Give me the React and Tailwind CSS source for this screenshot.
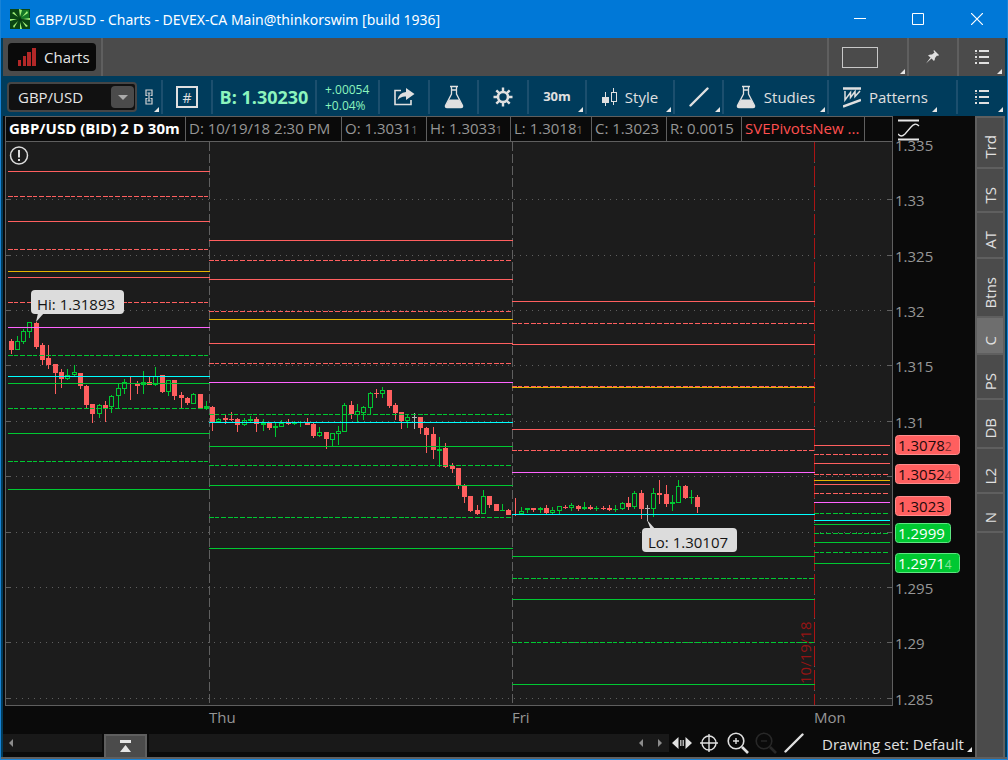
const RED = "#ff5f5f";
const GREEN = "#00c832";
const YELLOW = "#e6b400";
const PINK = "#ff64ff";
const CYAN = "#00ffff";

// pivot levels for each session: [y, color, dashed]
const sessions = [
  {
    from: 8,
    to: 210,
    levels: [
      [171, RED], [196, RED, true], [221, RED], [249, RED, true], [271, YELLOW],
      [277, RED], [302, RED, true], [327, PINK], [355, GREEN, true], [376, CYAN],
      [383, GREEN], [408, GREEN, true], [433, GREEN], [461, GREEN, true], [489, GREEN],
    ],
  },
  {
    from: 209,
    to: 513,
    levels: [
      [240, RED], [260, RED, true], [279, RED], [311, RED, true], [319, YELLOW],
      [343, RED], [363, RED, true], [382, PINK], [414, GREEN, true], [422, CYAN],
      [446, GREEN], [465, GREEN, true], [485, GREEN], [517, GREEN, true], [548, GREEN],
    ],
  },
  {
    from: 512,
    to: 815,
    levels: [
      [301, RED], [323, RED, true], [344, RED], [387, YELLOW], [386, RED, true],
      [429, RED], [450, RED, true], [472, PINK], [514, CYAN], [556, GREEN],
      [578, GREEN, true], [599, GREEN], [642, GREEN, true], [684, GREEN],
    ],
  },
  {
    from: 814,
    to: 890,
    levels: [
      [445, RED], [454, RED, true], [463, RED], [474, RED, true], [480, YELLOW],
      [484, RED], [493, RED, true], [502, PINK], [513, GREEN, true], [520, CYAN],
      [524, GREEN], [533, GREEN, true], [542, GREEN], [552, GREEN, true], [563, GREEN],
    ],
  },
];

// [x, high, body top, body bottom, low, kind]
// d = down, u = up (hollow), f = up (filled), n = unchanged
const candles = [
  [11, 339, 341, 350, 354, "d"], [17, 336, 341, 350, 350, "u"], [23, 329, 331, 342, 344, "u"],
  [29, 322, 322, 332, 338, "u"], [36, 322, 323, 347, 349, "d"], [42, 343, 345, 360, 365, "d"],
  [48, 345, 358, 365, 369, "d"], [55, 364, 364, 373, 394, "d"], [61, 369, 372, 379, 388, "d"],
  [67, 369, 375, 379, 380, "u"], [74, 365, 372, 375, 376, "u"], [80, 373, 373, 386, 389, "d"],
  [86, 385, 386, 405, 408, "d"], [92, 404, 404, 414, 423, "d"], [99, 404, 405, 414, 418, "u"],
  [105, 401, 405, 409, 422, "d"], [111, 395, 396, 407, 413, "u"], [118, 384, 388, 396, 408, "u"],
  [124, 379, 382, 389, 394, "u"], [130, 376, 376, 377, 400, "d"], [137, 381, 383, 386, 394, "d"],
  [143, 371, 382, 385, 394, "f"], [149, 377, 382, 385, 385, "d"], [155, 367, 376, 385, 386, "u"],
  [162, 375, 375, 392, 393, "d"], [168, 380, 380, 392, 396, "u"], [174, 380, 380, 396, 400, "d"],
  [181, 392, 395, 398, 408, "d"], [187, 397, 398, 403, 405, "d"], [193, 393, 394, 404, 404, "u"],
  [200, 394, 394, 408, 408, "d"], [206, 401, 406, 409, 410, "f"], [212, 406, 407, 422, 431, "d"],
  [218, 418, 419, 422, 422, "u"], [225, 414, 418, 420, 424, "d"], [231, 412, 419, 420, 421, "d"],
  [237, 418, 419, 425, 432, "d"], [244, 418, 420, 425, 426, "u"], [250, 416, 419, 421, 422, "f"],
  [256, 417, 419, 424, 432, "d"], [263, 419, 422, 425, 431, "f"], [269, 422, 422, 428, 430, "d"],
  [275, 422, 426, 428, 437, "f"], [281, 420, 423, 427, 427, "u"], [288, 419, 422, 424, 425, "d"],
  [294, 421, 422, 424, 425, "f"], [300, 421, 422, 423, 427, "f"], [307, 418, 422, 425, 425, "d"],
  [313, 423, 424, 436, 438, "d"], [319, 427, 432, 436, 437, "u"], [326, 432, 432, 439, 449, "d"],
  [332, 433, 433, 440, 446, "u"], [338, 426, 431, 434, 445, "u"], [344, 403, 405, 432, 432, "u"],
  [351, 401, 405, 414, 419, "d"], [357, 404, 411, 415, 422, "u"], [363, 406, 407, 413, 420, "u"],
  [370, 392, 393, 408, 414, "u"], [376, 389, 393, 394, 398, "d"], [382, 387, 390, 394, 398, "u"],
  [389, 390, 390, 406, 408, "d"], [395, 403, 405, 413, 420, "d"], [401, 412, 412, 421, 429, "d"],
  [407, 415, 417, 421, 428, "u"], [414, 413, 417, 418, 429, "n"], [420, 417, 417, 428, 434, "d"],
  [426, 427, 428, 435, 453, "d"], [433, 427, 434, 450, 459, "d"], [439, 437, 449, 451, 467, "f"],
  [445, 443, 448, 467, 468, "d"], [452, 463, 466, 469, 473, "d"], [458, 468, 468, 485, 489, "d"],
  [464, 484, 485, 497, 503, "d"], [470, 496, 496, 511, 512, "d"], [477, 505, 510, 514, 515, "d"],
  [483, 490, 496, 514, 514, "u"], [489, 496, 496, 505, 508, "d"], [496, 504, 504, 511, 511, "d"],
  [502, 504, 510, 511, 511, "f"], [508, 509, 510, 515, 515, "d"], [515, 498, 514, 515, 516, "d"],
  [521, 507, 511, 514, 514, "u"], [527, 508, 508, 510, 513, "f"], [533, 508, 508, 510, 512, "d"],
  [540, 507, 508, 510, 513, "f"], [546, 505, 508, 513, 514, "d"], [552, 507, 510, 513, 514, "u"],
  [559, 506, 506, 511, 514, "u"], [565, 505, 507, 508, 509, "d"], [571, 503, 505, 508, 511, "u"],
  [578, 505, 506, 509, 511, "d"], [584, 502, 507, 509, 510, "f"], [590, 505, 507, 509, 510, "d"],
  [596, 506, 508, 509, 511, "f"], [603, 506, 508, 509, 510, "d"], [609, 505, 508, 510, 511, "d"],
  [615, 505, 509, 510, 512, "f"], [622, 502, 503, 509, 510, "u"], [628, 497, 503, 507, 510, "d"],
  [634, 491, 493, 507, 509, "u"], [641, 490, 493, 509, 519, "d"], [647, 505, 508, 509, 521, "n"],
  [653, 488, 493, 509, 517, "u"], [659, 480, 493, 495, 504, "d"], [666, 485, 494, 504, 507, "d"],
  [672, 495, 502, 504, 511, "f"], [678, 480, 486, 503, 503, "u"], [685, 485, 486, 498, 499, "d"],
  [691, 490, 497, 498, 504, "f"], [697, 495, 497, 507, 513, "d"],
];

const prices = [
  [144, "1.335"], [199, "1.33"], [255, "1.325"], [310, "1.32"], [365, "1.315"], [421, "1.31"],
  [587, "1.295"], [642, "1.29"], [698, "1.285"],
];

const gridRows = [199, 255, 310, 365, 421, 476, 532, 587, 642, 698];

const tags = [
  { y: 435, w: 65, main: "1.3078", last: "2", bg: RED, edge: "#ff8c8c", text: "#1e0a0a", dim: "#8c3232" },
  { y: 464, w: 65, main: "1.3052", last: "4", bg: RED, edge: "#ff8c8c", text: "#1e0a0a", dim: "#8c3232" },
  { y: 496, w: 56, main: "1.3023", bg: RED, edge: "#ff8c8c", text: "#1e0a0a" },
  { y: 523, w: 56, main: "1.2999", bg: GREEN, edge: "#5fe682", text: "#ffffff" },
  { y: 553, w: 65, main: "1.2971", last: "4", bg: GREEN, edge: "#5fe682", text: "#ffffff", dim: "#82e69b" },
];

const tabs = [
  { name: "Trd", size: "h-[49px]" },
  { name: "TS", size: "h-[42px]" },
  { name: "AT", size: "h-[44px]" },
  { name: "Btns", size: "h-[57px]" },
  { name: "C", size: "h-[35px]", active: true },
  { name: "PS", size: "h-[43px]" },
  { name: "DB", size: "h-[47px]" },
  { name: "L2", size: "h-[43px]" },
  { name: "N", size: "h-[37px]" },
];

const Corner = ({ className = "right-0.5" }) => (
  <svg className={`absolute bottom-0.5 ${className}`} width="5" height="5" viewBox="0 0 5 5">
    <path d="M5 0V5H0Z" fill="#e6e6e6" />
  </svg>
);

const Flask = () => (
  <svg width="20" height="24" viewBox="0 0 20 24">
    <path
      d="M6 1.5H14M7.5 2V9L1.5 20.5Q1 22.5 3 22.5H17Q19 22.5 18.5 20.5L12.5 9V2M7.5 5H12.5"
      fill="none"
      stroke="#e0e0e0"
      strokeWidth="1.3"
    />
    <path d="M5 14.5H15L18.5 20.5Q19 22.5 17 22.5H3Q1 22.5 1.5 20.5Z" fill="#e0e0e0" />
  </svg>
);

const List = () => (
  <svg width="14" height="14" viewBox="0 0 14 14" shapeRendering="crispEdges">
    <path d="M0 0H2V2H0ZM0 6H2V8H0ZM0 12H2V14H0Z" fill="#e0e0e0" />
    <path d="M4 0H14V2H4ZM4 6H14V8H4ZM4 12H14V14H4Z" fill="#e0e0e0" />
    <path d="M0 3H2V4H0ZM0 9H2V10H0Z" fill="#8a8a8a" />
  </svg>
);

const LineIcon = () => (
  <svg width="20" height="20" viewBox="0 0 20 20">
    <path d="M1.5 18.5L18.5 1.5" stroke="#e0e0e0" strokeWidth="2.4" strokeLinecap="round" />
  </svg>
);

const ToolButton = ({ label, className, children }) => (
  <button
    type="button"
    aria-label={label}
    className={`relative flex h-[34px] shrink-0 items-center justify-center border-r-2 border-[#1c4f6e] ${className}`}
  >
    {children}
  </button>
);

const TitleBar = () => (
  <header className="flex h-[38px] items-center bg-[#0078d7] pl-[9px] text-white">
    <svg width="20" height="20" viewBox="0 0 20 20">
      <rect width="20" height="20" fill="#0a4614" />
      <rect x="11" y="1" width="8" height="9" fill="#147828" />
      <path
        d="M10 8L9 0L12 1ZM12 8L17 2L18 4ZM13 10L20 9V11ZM12 12L18 17L16 18ZM10 13L12 20H10ZM8 12L4 19L3 17ZM7 10L0 12V10ZM8 8L2 4L4 3Z"
        fill="#a0f078"
      />
      <circle cx="10.5" cy="10.5" r="1.3" fill="#063010" />
    </svg>
    <h1 className="ml-[5px] whitespace-nowrap font-['Noto_Sans','Open_Sans',sans-serif] text-[14px]">
      GBP/USD - Charts - DEVEX-CA Main@thinkorswim [build 1936]
    </h1>
    <div className="ml-auto flex h-full">
      <button type="button" aria-label="Minimize" className="flex w-[58px] items-center justify-center">
        <svg width="12" height="12" viewBox="0 0 12 12">
          <path d="M0 5.5H12" stroke="#fff" />
        </svg>
      </button>
      <button type="button" aria-label="Maximize" className="flex w-[58px] items-center justify-center">
        <svg width="12" height="12" viewBox="0 0 12 12">
          <path d="M.5 .5H11.5V11.5H.5Z" stroke="#fff" fill="none" />
        </svg>
      </button>
      <button type="button" aria-label="Close" className="flex w-[60px] items-center justify-center">
        <svg width="12" height="12" viewBox="0 0 12 12">
          <path d="M0 0L12 12M12 0L0 12" stroke="#fff" strokeWidth="1.2" />
        </svg>
      </button>
    </div>
  </header>
);

const GadgetBar = () => (
  <nav className="flex h-[38px] bg-[#4b4b4b] pl-[5px] pr-[1px]">
    <div className="flex items-center border-r-2 border-[#5f5f5f] pr-[5px]">
      <button type="button" className="flex h-7 w-[88px] items-center rounded bg-[#0a0a0a] pl-2.5 text-[15px] text-[#e6e6e6]">
        <svg width="18" height="18" viewBox="0 0 18 18" shapeRendering="crispEdges">
          <path d="M0 12H3V18H0ZM5 8H8V18H5ZM9 4H13V18H9ZM14 0H18V18H14Z" fill="#b42828" />
        </svg>
        <span className="ml-2">Charts</span>
      </button>
    </div>
    <button type="button" aria-label="Layout grid" className="relative ml-auto flex w-20 items-center border-l-2 border-[#5f5f5f] pl-[13px]">
      <span className="h-[21px] w-9 border border-[#c8c8c8]"></span>
      <Corner />
    </button>
    <button type="button" aria-label="Pin" className="flex w-[50px] items-center justify-center border-l-2 border-[#5f5f5f]">
      <svg width="14" height="14" viewBox="0 0 14 14">
        <path d="M8 0L13 5L12 6L11 5.5L9 8Q9 10 8 11L5.5 8.5L0 13.5L4.5 7.5L2 5.5Q4 4 6 4.5L8.5 2.5L7.5 1Z" fill="#e0e0e0" />
      </svg>
    </button>
    <button type="button" aria-label="Menu" className="relative flex w-[47px] items-center justify-center border-l-2 border-[#5f5f5f]">
      <List />
      <Corner />
    </button>
  </nav>
);

const Toolbar = () => (
  <div className="flex h-10 items-center bg-[#003c5c] pl-1 pt-0.5 text-[15px] text-[#e0e0e0]">
    <div className="flex h-[30px] w-[130px] shrink-0 items-center rounded border-2 border-[#464646] bg-[#111] pl-[9px] pr-[1px]">
      <input
        aria-label="Symbol"
        defaultValue="GBP/USD"
        className="w-0 flex-1 bg-transparent text-[15px] text-[#e6e6e6] outline-none"
      />
      <button type="button" aria-label="Choose symbol" className="flex h-[22px] w-[23px] items-center justify-center rounded-sm bg-[#4b4b4b]">
        <svg width="10" height="5" viewBox="0 0 10 5">
          <path d="M0 0H10L5 5Z" fill="#aaa" />
        </svg>
      </button>
    </div>
    <ToolButton label="Link symbol" className="w-[26px]">
      <svg width="8" height="16" viewBox="0 0 8 16">
        <path
          d="M2.5 6.5H1V1H7V6.5H5.5M2.5 9.5H1V15H7V9.5H5.5M4 3.5V12.5M2.5 4H5.5M2.5 12H5.5"
          fill="none"
          stroke="#d2d2d2"
          strokeWidth="1.2"
        />
      </svg>
      <Corner />
    </ToolButton>
    <ToolButton label="Symbol table" className="w-[50px]">
      <span className="flex h-[22px] w-[22px] items-center justify-center border-2 border-[#e0e0e0] text-[14px]">#</span>
    </ToolButton>
    <div className="flex h-[34px] w-[104px] shrink-0 items-center justify-center border-r-2 border-[#1c4f6e] text-[18px] font-bold text-[#8cf5be]">
      B: 1.30230
    </div>
    <div className="flex h-[34px] w-[63px] shrink-0 flex-col justify-center border-r-2 border-[#1c4f6e] pl-2 pt-0.5 text-[12px] leading-4 text-[#8cf5be]">
      <span>+.00054</span>
      <span>+0.04%</span>
    </div>
    <ToolButton label="Share" className="w-[50px]">
      <svg width="21" height="18" viewBox="0 0 21 18">
        <path d="M7 2.5H1V16.5H17V12" fill="none" stroke="#e0e0e0" strokeWidth="1.6" />
        <path d="M12 0L20.5 6L12 12V8.5Q7 8 3.5 12Q5 4.5 12 4Z" fill="#e0e0e0" />
      </svg>
    </ToolButton>
    <ToolButton label="Edit studies" className="w-[49px]">
      <Flask />
    </ToolButton>
    <ToolButton label="Settings" className="w-[50px]">
      <svg width="20" height="20" viewBox="0 0 20 20">
        <circle cx="10" cy="10" r="5" fill="none" stroke="#e0e0e0" strokeWidth="2.6" />
        <path
          d="M10 .5V4.5M10 15.5V19.5M.5 10H4.5M15.5 10H19.5M3.3 3.3L6.2 6.2M13.8 13.8L16.7 16.7M3.3 16.7L6.2 13.8M13.8 6.2L16.7 3.3"
          stroke="#e0e0e0"
          strokeWidth="2.4"
        />
      </svg>
    </ToolButton>
    <ToolButton className="w-[58px] text-[13px] font-bold">
      30m
      <Corner />
    </ToolButton>
    <ToolButton className="w-[88px] gap-2">
      <svg width="15" height="19" viewBox="0 0 15 19" shapeRendering="crispEdges">
        <path d="M3.5 4V18M11.5 0V4M11.5 14V17" stroke="#e0e0e0" />
        <path d="M0 9H7V15H0Z" fill="#e0e0e0" />
        <path d="M9.5 4.5H14.5V13.5H9.5Z" fill="none" stroke="#e0e0e0" />
      </svg>
      Style
      <Corner />
    </ToolButton>
    <ToolButton label="Drawing tools" className="w-[49px]">
      <LineIcon />
      <Corner />
    </ToolButton>
    <ToolButton className="w-[105px] gap-2">
      <Flask />
      Studies
      <Corner />
    </ToolButton>
    <button type="button" className="relative flex h-[34px] flex-1 items-center gap-2 border-r-2 border-[#1c4f6e] pl-[14px]">
      <svg width="18" height="21" viewBox="0 0 18 21">
        <path d="M0 1.5H18M0 19.5L18 13" stroke="#e0e0e0" strokeWidth="2.4" fill="none" />
        <path d="M2 4V13L7.5 5.5V10.5L12 4.5V9.5L17 4" stroke="#e0e0e0" strokeWidth="1.5" fill="none" />
      </svg>
      Patterns
      <Corner className="right-[19px]" />
    </button>
    <button type="button" aria-label="Chart menu" className="relative flex h-[34px] w-[47px] shrink-0 items-center justify-center">
      <List />
      <Corner />
    </button>
  </div>
);

const Cell = ({ className, children, last }) => (
  <div className={`shrink-0 whitespace-nowrap border-r border-[#5f5f5f] pl-[3px] leading-[22px] ${className}`}>
    {children}
    {last && <span className="text-[11px] text-[#6e6e6e]">{last}</span>}
  </div>
);

const InfoRow = () => (
  <div className="flex h-[25px] text-[15px] text-[#969696]">
    <div className="flex flex-1 overflow-hidden border-l border-r border-t border-[#5f5f5f]">
      <Cell className="w-[180px] font-bold text-white">GBP/USD (BID) 2 D 30m</Cell>
      <Cell className="w-[156px]">D: 10/19/18 2:30 PM</Cell>
      <Cell className="w-[85px]" last="1">O: 1.3031</Cell>
      <Cell className="w-[84px]" last="1">H: 1.3033</Cell>
      <Cell className="w-[81px]" last="1">L: 1.3018</Cell>
      <Cell className="w-[75px]">C: 1.3023</Cell>
      <Cell className="w-[75px]">R: 0.0015</Cell>
      <Cell className="w-[123px] text-[#ff5050]">SVEPivotsNew ...</Cell>
    </div>
    <button type="button" aria-label="Price scale" className="flex w-[82px] items-end pl-[5px]">
      <svg width="22" height="22" viewBox="0 0 22 22">
        <path d="M0 1.5H21M0 20.5H21" stroke="#e6e6e6" strokeWidth="2" />
        <path d="M0 15Q3 19 7 15L13 8Q17 3 21 7" fill="none" stroke="#e6e6e6" strokeWidth="1.3" />
      </svg>
    </button>
  </div>
);

const Candle = ({ data }) => {
  const [x, high, top, bottom, low, kind] = data;
  const color = kind === "d" ? RED : kind === "n" ? "#b4b4b4" : GREEN;
  return (
    <g fill={color}>
      {kind === "u" ? (
        <>
          <rect x={x} y={high} width="1" height={top - high} />
          <rect x={x} y={bottom} width="1" height={low - bottom} />
          <path d={`M${x - 1.5} ${top + 0.5}H${x + 2.5}V${bottom - 0.5}H${x - 1.5}Z`} fill="none" stroke={color} />
        </>
      ) : (
        <>
          <rect x={x} y={high} width="1" height={low - high} />
          <rect x={x - 2} y={top} width="5" height={bottom - top} />
        </>
      )}
    </g>
  );
};

const Chart = () => (
  <svg
    className="block w-full overflow-visible"
    viewBox="5 141 970 593"
    role="img"
    aria-label="GBP/USD 30 minute chart"
    fontSize="15"
    shapeRendering="crispEdges"
  >
    <rect x="5" y="141" width="888" height="565" fill="#5f5f5f" />
    <rect x="6" y="142" width="886" height="563" fill="#1c1c1c" />

    {gridRows.map((y) => (
      <g key={y} stroke="#5f5f5f">
        <path d={`M5 ${y + 0.5}H11M887 ${y + 0.5}H892`} />
        <path d={`M16 ${y + 0.5}H884`} strokeDasharray="1 5" />
      </g>
    ))}
    <path d="M209.5 142V705M512.5 142V705M814.5 142V705" stroke="#5f5f5f" strokeDasharray="9 3" />
    <path d="M814.5 142V705" stroke="#aa1414" strokeDasharray="20 4" />
    <text transform="translate(811 684) rotate(-90)" fill="#961414">
      10/19/18
    </text>

    {candles.map((c) => (
      <Candle key={c[0]} data={c} />
    ))}
    {sessions.map((s) =>
      s.levels.map(([y, color, dashed]) => (
        <path
          key={`${s.from}-${y}`}
          d={`M${s.from} ${y + 0.5}H${s.to}`}
          stroke={color}
          strokeDasharray={dashed ? "5 1 4 2 5 2" : undefined}
        />
      )),
    )}

    {/* study alert */}
    <g fill="none" stroke="#dcdcdc" strokeWidth="1.5" shapeRendering="auto">
      <circle cx="19" cy="155.5" r="8.5" />
      <path d="M19 150V157.5M19 159V161" strokeWidth="2" />
    </g>

    {/* high and low bubbles */}
    <g fill="#dcdcdc" shapeRendering="auto">
      <path d="M36 322L38 313H44Z" />
      <rect x="31" y="290" width="93" height="24" rx="4" />
      <path d="M647 520L651 530H656Z" />
      <rect x="642" y="528" width="95" height="24" rx="4" />
    </g>
    <text x="37" y="310" fill="#141414">Hi: 1.31893</text>
    <text x="648" y="548" fill="#141414">Lo: 1.30107</text>

    <g fill="#969696">
      {prices.map(([y, label]) => (
        <text key={label} x="895" y={y + 7}>
          {label}
        </text>
      ))}
      <text x="209" y="723">Thu</text>
      <text x="512" y="723">Fri</text>
      <text x="814" y="723">Mon</text>
    </g>

    {tags.map((t) => (
      <g key={t.main} shapeRendering="auto">
        <rect x="895.5" y={t.y + 0.5} width={t.w - 1} height="19" rx="3" fill={t.bg} stroke={t.edge} />
        <text x="898" y={t.y + 16} fill={t.text}>
          {t.main}
          {t.last && (
            <tspan fontSize="12" fill={t.dim}>
              {t.last}
            </tspan>
          )}
        </text>
      </g>
    ))}
  </svg>
);

const BottomBar = () => (
  <footer className="flex h-[23px] items-start pr-px text-[15px] text-[#e0e0e0]">
    <div className="flex h-[18px] w-[99px] items-center bg-[#191919] pl-[6px]">
      <svg width="4" height="8" viewBox="0 0 4 8">
        <path d="M4 0V8L0 4Z" fill="#8c8c8c" />
      </svg>
    </div>
    <button type="button" aria-label="Expand panel" className="mx-0.5 flex h-[23px] w-[43px] items-center justify-center border-2 border-b-0 border-[#5f5f5f] bg-[#4b4b4b]">
      <svg width="11" height="13" viewBox="0 0 11 13">
        <path d="M0 0H11V3H0ZM5.5 5L11 12H0Z" fill="#e6e6e6" />
      </svg>
    </button>
    <div className="flex h-[18px] flex-1 items-center justify-end gap-[15px] bg-[#191919] pr-[7px]">
      <svg width="4" height="8" viewBox="0 0 4 8">
        <path d="M4 0V8L0 4Z" fill="#8c8c8c" />
      </svg>
      <svg width="4" height="8" viewBox="0 0 4 8">
        <path d="M0 0V8L4 4Z" fill="#8c8c8c" />
      </svg>
    </div>
    <button type="button" aria-label="Pan" className="ml-[3px] flex h-[18px] items-center">
      <svg width="20" height="12" viewBox="0 0 20 12">
        <path d="M6.5 0V12L0 6ZM13.5 0V12L20 6Z" fill="#e0e0e0" />
        <path d="M8.5 3V9M10 3V9M11.5 3V9" stroke="#b0b0b0" strokeWidth="1" />
      </svg>
    </button>
    <button type="button" aria-label="Crosshair" className="ml-2 flex h-[18px] items-center">
      <svg width="18" height="18" viewBox="0 0 18 18">
        <circle cx="9" cy="9" r="7" fill="none" stroke="#e0e0e0" strokeWidth="1.4" />
        <path d="M9 0V18M0 9H18" stroke="#e0e0e0" strokeWidth="1.4" />
      </svg>
    </button>
    <button type="button" aria-label="Zoom in" className="ml-[9px] flex h-[18px] items-center">
      <svg width="22" height="22" viewBox="0 0 22 22">
        <circle cx="9" cy="9" r="7.8" fill="none" stroke="#e0e0e0" strokeWidth="1.6" />
        <path d="M9 6V12M6 9H12" stroke="#e0e0e0" strokeWidth="1.4" />
        <path d="M15 15L21 21" stroke="#e0e0e0" strokeWidth="2.6" />
      </svg>
    </button>
    <button type="button" aria-label="Zoom out" disabled className="ml-[6px] flex h-[18px] items-center">
      <svg width="22" height="22" viewBox="0 0 22 22">
        <circle cx="9" cy="9" r="7.8" fill="none" stroke="#282828" strokeWidth="1.6" />
        <path d="M6 9H12" stroke="#282828" strokeWidth="1.4" />
        <path d="M15 15L21 21" stroke="#282828" strokeWidth="2.6" />
      </svg>
    </button>
    <button type="button" aria-label="Draw line" className="ml-[7px] flex h-[18px] items-center">
      <LineIcon />
    </button>
    <button type="button" className="relative ml-[18px] h-5 w-[152px] whitespace-nowrap text-left leading-4">
      Drawing set: Default
      <Corner />
    </button>
  </footer>
);

const SideTabs = () => (
  <aside className="flex w-[30px] flex-col gap-0.5 bg-[#5f5f5f] px-0.5 pt-0.5 text-[15px] text-[#e0e0e0]">
    {tabs.map((t) => (
      <button
        key={t.name}
        type="button"
        className={`flex shrink-0 items-end justify-center pb-2 ${t.size} ${t.active ? "bg-[#6e6e6e]" : "bg-[#4b4b4b]"}`}
      >
        <span className="rotate-180 leading-[18px] [writing-mode:vertical-rl]">{t.name}</span>
      </button>
    ))}
    <div className="flex-1 bg-[#4b4b4b]"></div>
  </aside>
);

const App = () => {
  return (
    <div className="flex min-h-screen flex-col border-b border-l border-r border-[#1883d7] bg-[#0a0a0a] font-['Open_Sans','Noto_Sans',sans-serif]">
      <TitleBar />
      <div className="flex flex-1 flex-col border-l-2 border-r-2 border-[#003c5c]">
        <GadgetBar />
        <Toolbar />
        <main className="flex flex-1">
          <div className="flex min-w-0 flex-1 flex-col">
            <div className="pl-0.5">
              <InfoRow />
              <Chart />
            </div>
            <BottomBar />
          </div>
          <SideTabs />
        </main>
      </div>
      <div className="h-0.5 bg-[#5f5f5f]"></div>
    </div>
  );
};

export default App;
